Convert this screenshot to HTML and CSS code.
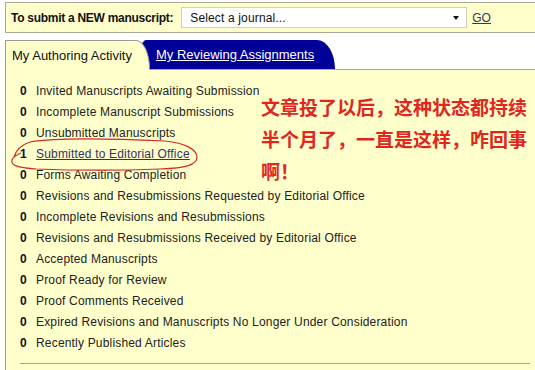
FILE: index.html
```html
<!DOCTYPE html>
<html lang="en">
<head>
  <meta charset="UTF-8">
  <title>Author Dashboard</title>
  <link rel="stylesheet" href="styles.css">
</head>
<body>

  <!-- new submission bar -->
  <div class="submit-bar">
    <label for="journal">To submit a NEW manuscript:</label>
    <div class="select-wrap">
      <select id="journal">
        <option>Select a journal...</option>
      </select>
    </div>
    <a href="#" class="go">GO</a>
  </div>

  <!-- tabs -->
  <div class="tabs">
    <div class="tab active">My Authoring Activity</div>
    <div class="tab other"><a href="#">My Reviewing Assignments</a></div>
  </div>

  <!-- authoring queue -->
  <div class="panel">
    <ul class="queue">
      <li><b>0</b><span>Invited Manuscripts Awaiting Submission</span></li>
      <li><b>0</b><span>Incomplete Manuscript Submissions</span></li>
      <li><b>0</b><span>Unsubmitted Manuscripts</span></li>
      <li><b>1</b><a href="#">Submitted to Editorial Office</a></li>
      <li><b>0</b><span>Forms Awaiting Completion</span></li>
      <li><b>0</b><span>Revisions and Resubmissions Requested by Editorial Office</span></li>
      <li><b>0</b><span>Incomplete Revisions and Resubmissions</span></li>
      <li><b>0</b><span>Revisions and Resubmissions Received by Editorial Office</span></li>
      <li><b>0</b><span>Accepted Manuscripts</span></li>
      <li><b>0</b><span>Proof Ready for Review</span></li>
      <li><b>0</b><span>Proof Comments Received</span></li>
      <li><b>0</b><span>Expired Revisions and Manuscripts No Longer Under Consideration</span></li>
      <li><b>0</b><span>Recently Published Articles</span></li>
    </ul>
    <hr class="rule">
  </div>

  <!-- annotation layered on top of the screenshot -->
  <p class="note">文章投了以后，这种状态都持续<br>半个月了，一直是这样，咋回事<br>啊！</p>
  <svg class="circle" width="535" height="370" viewBox="0 0 535 370">
    <path d="M14 157 C16 150 21 145 30 142 C60 137 120 139 165 141 C186 143 197 150 197 157 C197 165 186 168 160 169 C110 171 62 170 36 169 C21 168 10 166 12 160 C13 157 16 155 21 153"
          fill="none" stroke="#d42a22" stroke-width="1.2"/>
  </svg>

</body>
</html>
```

FILE: styles.css
```css
* { margin:0; padding:0; box-sizing:border-box; }
html, body { width:100%; height:100%; overflow:hidden; }
body {
  background:#fff;
  color:#222;
  font-family:"Liberation Sans", Arial, sans-serif;
  font-size:12px;
  position:relative;
}

.submit-bar {
  display:flex;
  align-items:center;
  height:31px;
  margin:2px 0 0 5px;
  padding-left:5px;
  background:#ffffcc;
  border:1px solid #a8a894;
  border-right:none;
}
.submit-bar label { font-weight:bold; color:#111; letter-spacing:-0.28px; }
.select-wrap {
  position:relative;
  margin-left:8px;
}
.select-wrap select {
  appearance:none;
  -webkit-appearance:none;
  width:286px;
  height:21px;
  padding:0 0 0 8px;
  border:1px solid #cfcfc4;
  background:#fff;
  color:#111;
  font-family:"Liberation Sans", Arial, sans-serif;
  font-size:12px;
  letter-spacing:0.15px;
}
.select-wrap::after {
  content:"";
  position:absolute;
  right:8px; top:9px;
  border-left:3px solid transparent;
  border-right:3px solid transparent;
  border-top:4px solid #111;
}
.go {
  margin-left:5px;
  color:#333366;
  text-decoration:underline;
}

.tabs {
  display:flex;
  align-items:flex-end;
  margin:7px 0 0 5px;
  height:29px;
}
.tab {
  height:29px;
  line-height:29px;
  font-size:13px;
}
.tab.active {
  position:relative;
  z-index:2;
  padding:0 17px 0 6px;
  background:#ffffcc;
  border:1px solid #9c9c94;
  border-bottom:none;
  border-top-right-radius:14px 29px;
  height:30px;
  margin-bottom:-1px;
  color:#111;
}
.tab.other {
  margin-left:-12px;
  padding:0 21px 0 18px;
  background:#000099;
  border-top-left-radius:8px 29px;
  border-top-right-radius:18px 29px;
}
.tab.other a { color:#fff; }

.panel {
  margin-left:5px;
  height:400px;
  padding:11px 5px 0 14px;
  background:#ffffcc;
  border-left:1px solid #9c9c94;
  border-top:1px solid #a8a894;
}
.queue { list-style:none; letter-spacing:0.18px; }
.queue li {
  display:flex;
  height:21px;
  line-height:21px;
}
.queue b { width:16px; color:#111; }
.queue a { color:#333366; }
.rule {
  border:none;
  border-top:1px solid #a4a4a0;
  margin-top:9px;
}

.note {
  position:absolute;
  left:261px;
  top:91px;
  color:#e0261f;
  font-family:"Noto Sans CJK SC", sans-serif;
  font-weight:bold;
  font-size:19px;
  line-height:32px;
}
.circle {
  position:absolute;
  left:0; top:0;
  pointer-events:none;
}
```
